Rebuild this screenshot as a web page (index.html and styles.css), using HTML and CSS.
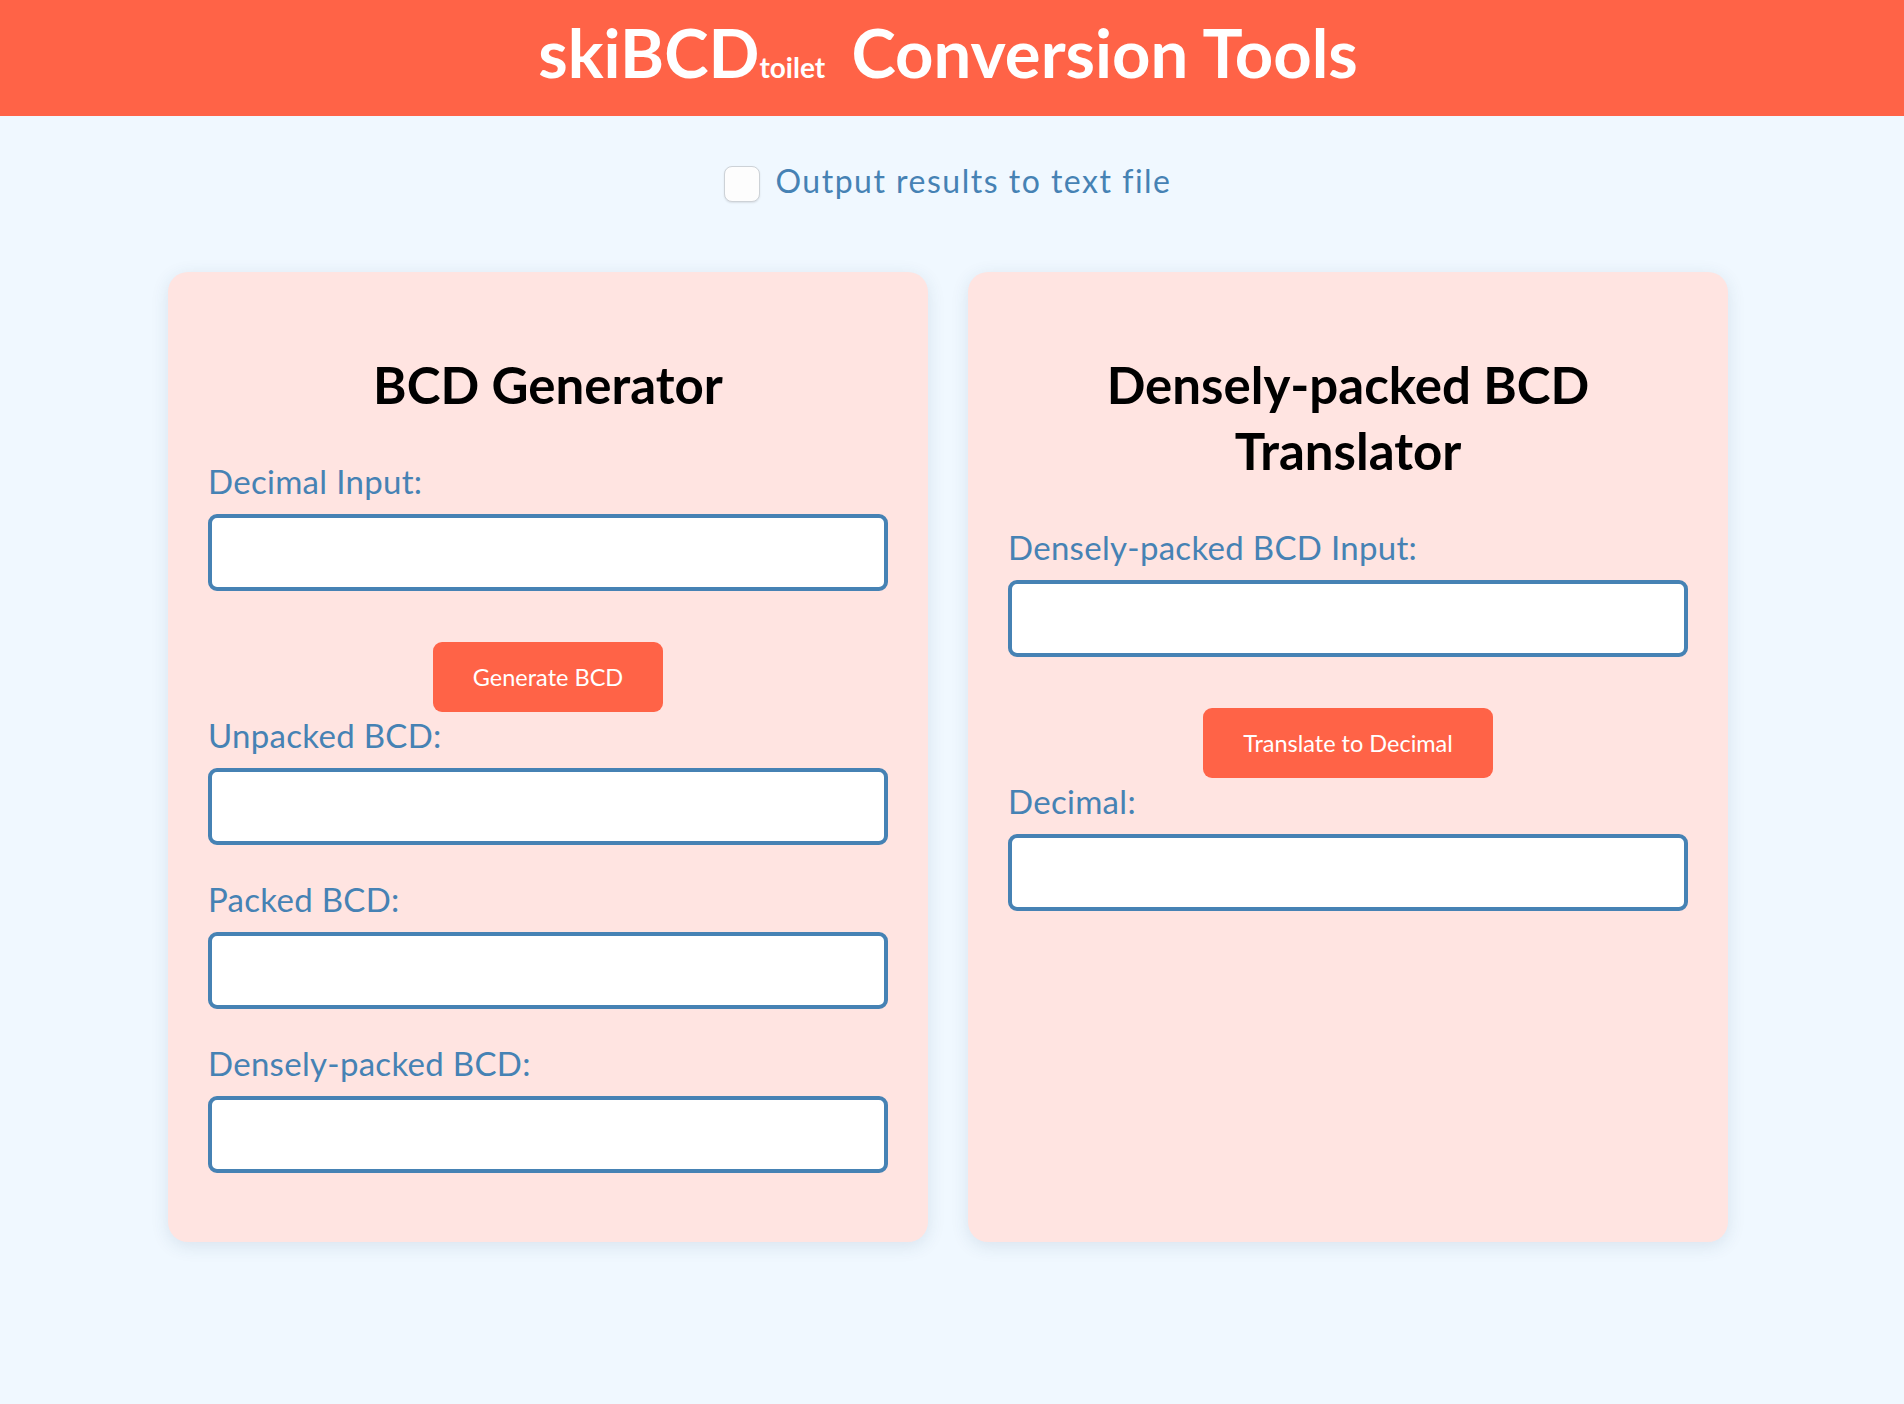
FILE: index.html
```html
<!DOCTYPE html>
<html lang="en">
<head>
<meta charset="utf-8">
<title>skiBCDtoilet Conversion Tools</title>
<link rel="stylesheet" href="styles.css">
</head>
<body>
<header class="site-header">
  <h1 class="site-title">skiBCD<span class="title-sub">toilet</span> Conversion Tools</h1>
</header>
<main class="page">
  <div class="options">
    <input type="checkbox" id="outputFile" class="check">
    <label for="outputFile" class="check-label">Output results to text file</label>
  </div>
  <div class="cards">
    <section class="card">
      <h2 class="card-title">BCD Generator</h2>
      <label class="field-label" for="decimalInput">Decimal Input:</label>
      <input class="field" type="text" id="decimalInput">
      <button class="btn">Generate BCD</button>
      <label class="field-label" for="unpacked">Unpacked BCD:</label>
      <input class="field" type="text" id="unpacked">
      <label class="field-label" for="packed">Packed BCD:</label>
      <input class="field" type="text" id="packed">
      <label class="field-label" for="dpd">Densely-packed BCD:</label>
      <input class="field" type="text" id="dpd">
    </section>
    <section class="card">
      <h2 class="card-title">Densely-packed BCD Translator</h2>
      <label class="field-label" for="dpdInput">Densely-packed BCD Input:</label>
      <input class="field" type="text" id="dpdInput">
      <button class="btn">Translate to Decimal</button>
      <label class="field-label" for="decOut">Decimal:</label>
      <input class="field" type="text" id="decOut">
    </section>
  </div>
</main>
</body>
</html>
```

FILE: styles.css
```css
* { box-sizing: border-box; }

html, body {
  margin: 0;
  padding: 0;
  background: #f0f8ff;
  font-family: "Comic Sans MS", Lato, "Open Sans", sans-serif;
  min-height: 100%;
}

.site-header {
  background: #ff6347;
  height: 116px;
  padding-top: 10px;
  padding-right: 8px;
}

.site-title {
  margin: 0;
  color: #ffffff;
  font-size: 67px;
  font-weight: 700;
  line-height: 84px;
  text-align: center;
}

.title-sub {
  font-size: 28px;
  margin-right: 10px;
}

.page {
  margin-right: 8px;
}

.options {
  display: flex;
  justify-content: center;
  align-items: center;
  gap: 15px;
  margin-top: 47px;
}

.check {
  appearance: none;
  -webkit-appearance: none;
  width: 36px;
  height: 36px;
  margin: 0;
  background: #fdfdfd;
  border: 1.5px solid #cdd2d7;
  border-radius: 8px;
  box-shadow: 0 1px 2px rgba(0, 0, 0, 0.1);
}

.check-label {
  color: #4682b4;
  font-size: 32px;
  letter-spacing: 1.5px;
  line-height: 36px;
  padding-bottom: 6px;
}

.cards {
  display: flex;
  justify-content: center;
  gap: 40px;
  margin-top: 67px;
  padding-bottom: 100px;
}

.card {
  width: 760px;
  background: #ffe4e1;
  border-radius: 20px;
  padding: 40px 40px 35px;
  display: flex;
  flex-direction: column;
  box-shadow: 0 4px 18px rgba(40, 70, 110, 0.12);
}

.card-title {
  margin: 39.5px 0 43.7px;
  font-size: 51px;
  line-height: 66px;
  font-weight: 700;
  color: #000;
  text-align: center;
}

.field-label {
  display: block;
  color: #4682b4;
  font-size: 33px;
  letter-spacing: 0.3px;
  line-height: 40px;
  margin-bottom: 13px;
}

.field {
  display: block;
  width: 100%;
  height: 77px;
  margin: 0 0 34px;
  border: 4px solid #4682b4;
  border-radius: 9px;
  background: #fff;
  font-family: inherit;
  font-size: 30px;
  padding: 0 12px;
}

.btn {
  align-self: center;
  height: 70px;
  padding: 0 40px;
  margin: 17px 0 3px;
  background: #ff6347;
  color: #fff;
  border: none;
  border-radius: 9px;
  font-family: inherit;
  font-size: 23.5px;
  cursor: pointer;
}
```
